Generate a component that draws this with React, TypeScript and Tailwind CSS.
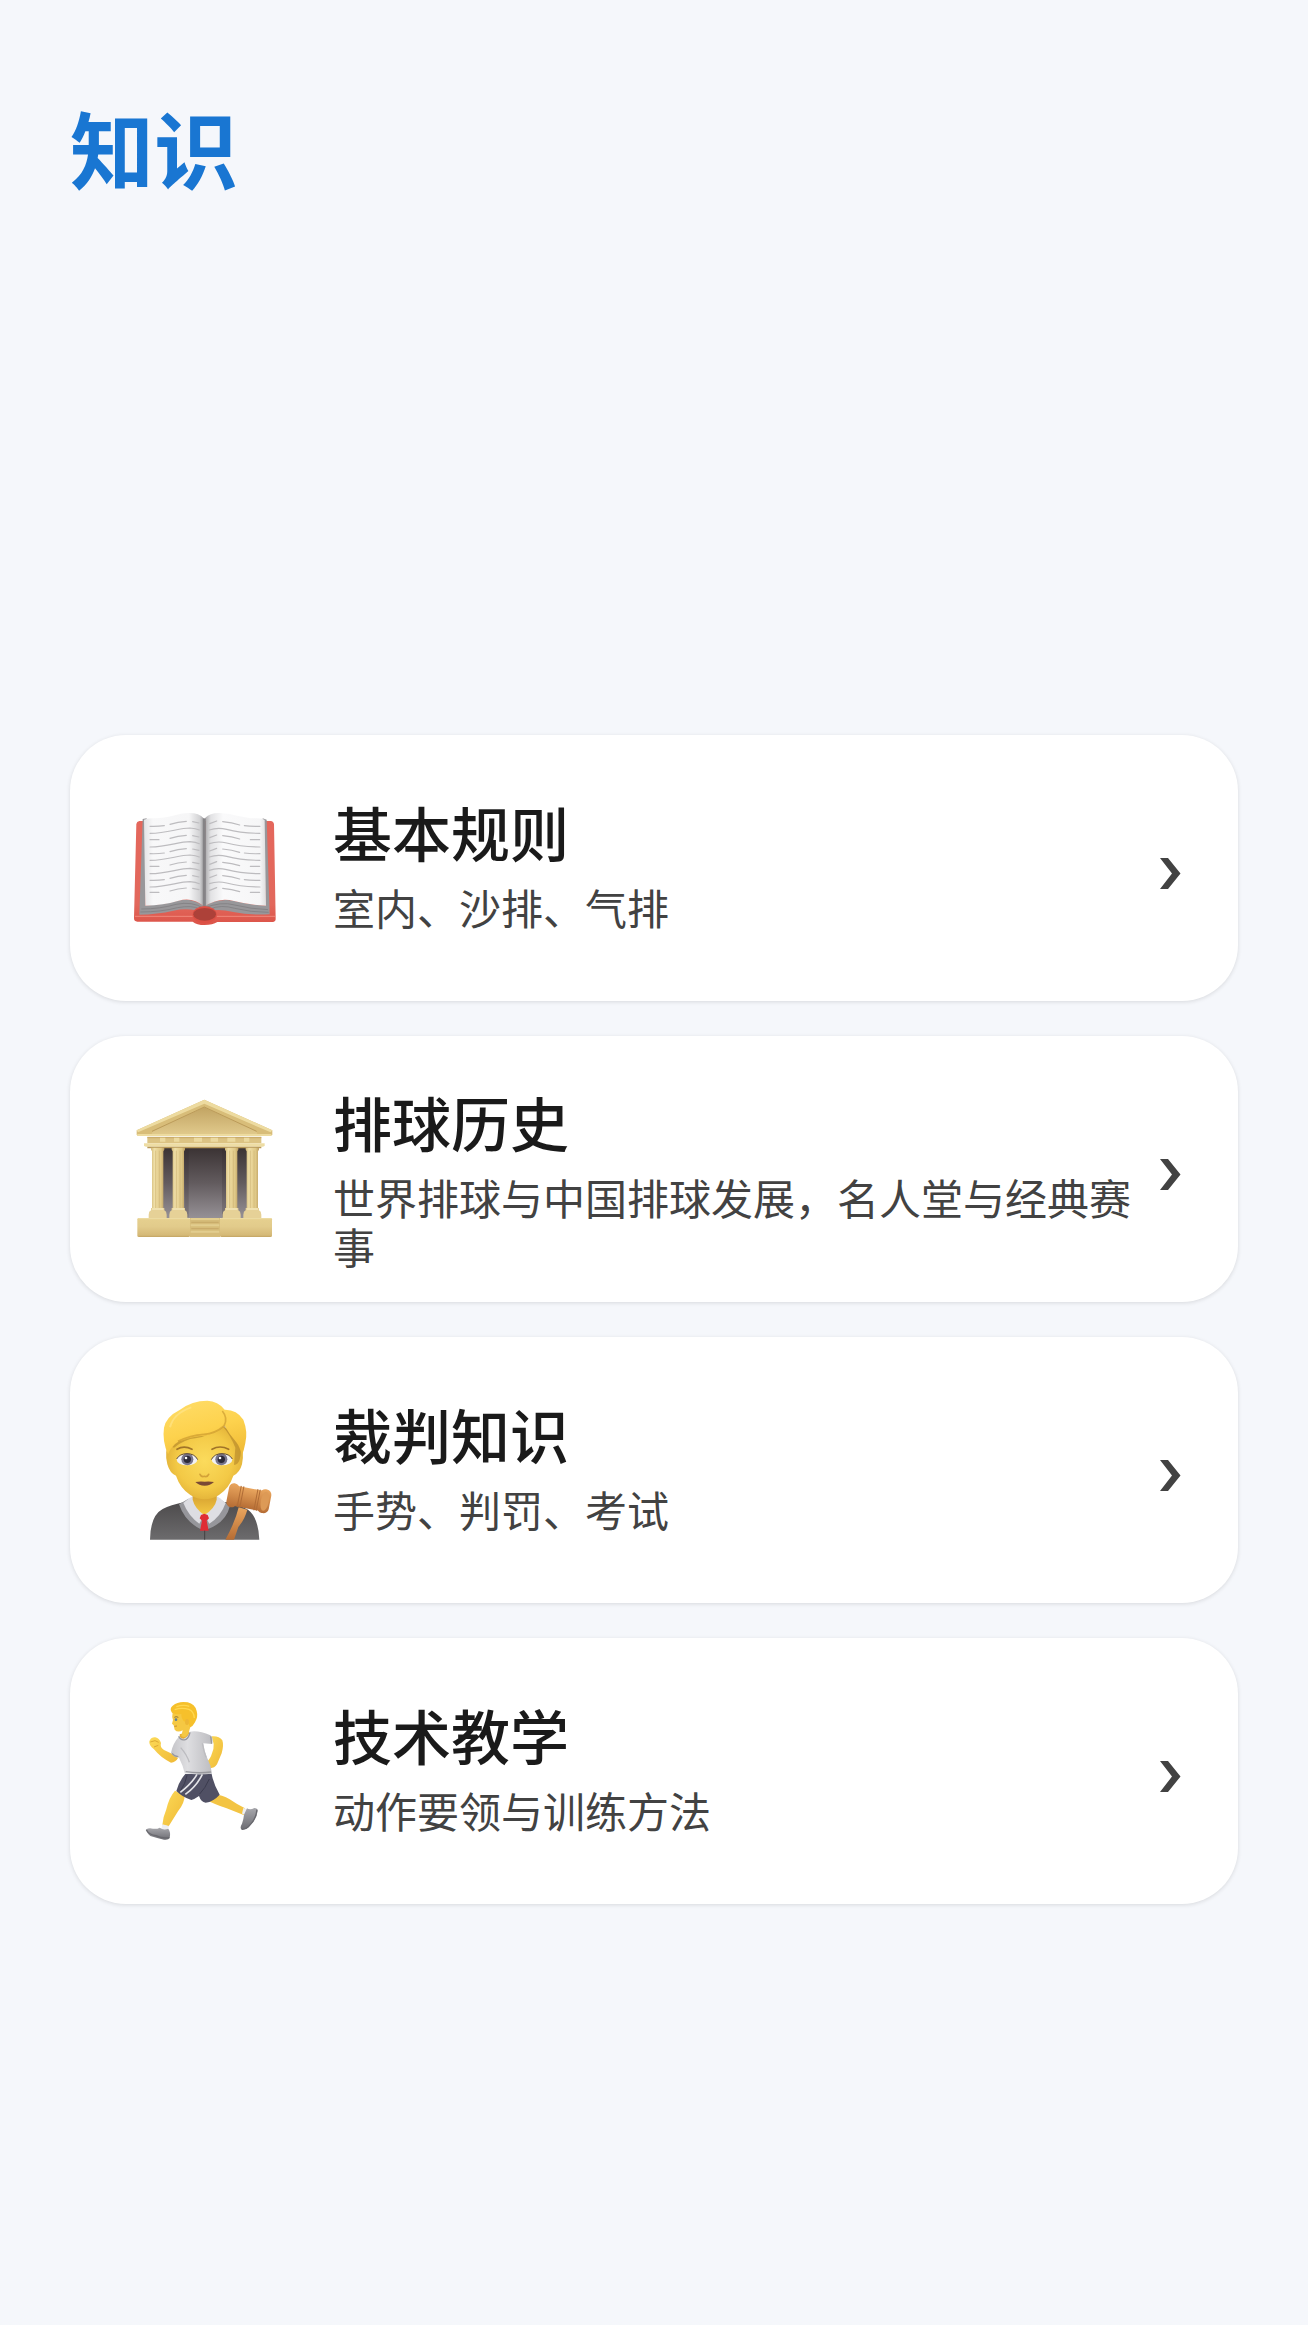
import React from 'react';

interface Topic {
  title: string;
  description: string;
  href: string;
  icon: React.ReactNode;
}

const textLines = [108, 129, 150, 170, 190, 210, 230, 250, 270, 290, 308];

const BookIcon = () => (
  <svg viewBox="0 -20 510 510" className="w-full" aria-hidden="true">
    <defs>
      <linearGradient id="bookLeft" x1="0" x2="1">
        <stop offset="0" stopColor="#e4e4e6" />
        <stop offset="0.15" stopColor="#f8f8f9" />
        <stop offset="0.75" stopColor="#f6f6f7" />
        <stop offset="0.93" stopColor="#d2d2d4" />
        <stop offset="1" stopColor="#9b9a9c" />
      </linearGradient>
      <linearGradient id="bookRight" x1="0" x2="1">
        <stop offset="0" stopColor="#a6a5a7" />
        <stop offset="0.1" stopColor="#e2e2e4" />
        <stop offset="0.3" stopColor="#fafafb" />
        <stop offset="0.9" stopColor="#f6f6f7" />
        <stop offset="1" stopColor="#dededf" />
      </linearGradient>
      <linearGradient id="bookCover" x1="0" y1="0" x2="0" y2="1">
        <stop offset="0" stopColor="#e4675c" />
        <stop offset="0.8" stopColor="#e2685c" />
        <stop offset="1" stopColor="#dc5348" />
      </linearGradient>
    </defs>
    <path
      d="M58 94H452Q461 95 462 104L467 388Q467 396 458 397H292Q278 406 254 406Q230 406 218 396H52Q42 396 42 386L49 103Q50 95 58 94Z"
      fill="url(#bookCover)"
    />
    <path d="M45 380H218M290 380H465" stroke="#f0887b" strokeWidth="3" />
    <path d="M68 88L80 86L76 348Q130 345 180 332Q218 324 252 350Q298 324 342 334Q390 346 438 348L428 86L440 90L449 374Q390 377 340 367Q302 358 280 362H228Q196 355 160 363Q112 374 58 375Z" fill="#98979a" />
    <path d="M64 358Q120 358 168 344Q218 334 250 356Q304 334 344 346Q392 358 444 360M61 367Q124 367 172 354Q216 346 240 358M270 358Q304 344 344 356Q392 368 446 368" stroke="#858386" strokeWidth="3" fill="none" />
    <path d="M72 90Q84 84 104 86C145 86 174 70 208 70Q238 70 251 86L252 350Q218 321 176 333Q130 347 76 348Z" fill="url(#bookLeft)" />
    <path d="M256 84Q270 69 300 70C340 72 370 86 404 86Q424 84 434 90L438 348Q390 346 342 334Q298 321 254 350Z" fill="url(#bookRight)" />
    <path d="M253 86V350" stroke="#858386" strokeWidth="9" />
    <ellipse cx="254" cy="375" rx="36" ry="26" fill="#dc5045" />
    <ellipse cx="254" cy="374" rx="34" ry="19" fill="#ad4139" />
    <g stroke="#bdbcbf" strokeWidth="3.5" fill="none" strokeLinecap="round">
      {textLines.map((y, i) =>
        i % 2 === 1 ? (
          <g key={y}>
            <path d={`M90 ${y + 2}C145 ${y + 2} 174 ${y - 14} 210 ${y - 14}Q228 ${y - 13} 238 ${y - 8}`} />
            <path d={`M268 ${y - 8}Q292 ${y - 17} 320 ${y - 10}C360 ${y + 1} 382 ${y + 2} 420 ${y + 2}`} />
          </g>
        ) : (
          <g key={y}>
            <path d={i % 4 === 2 ? `M90 ${y}H117` : `M90 ${y + 2}Q112 ${y + 3} 133 ${y}`} />
            <path d={`M150 ${y - 4}Q174 ${y - 12} 199 ${y - 13}M218 ${y - 12}L237 ${y - 8}`} />
            <path d={`M269 ${y - 6}L290 ${y - 14}M308 ${y - 12}Q336 ${y - 9} 359 ${y - 2}`} />
            <path d={i % 4 === 2 ? `M391 ${y}H419` : `M373 ${y}Q392 ${y + 3} 420 ${y + 2}`} />
          </g>
        )
      )}
    </g>
  </svg>
);

const columns = [
  { x: 96, w: 34 },
  { x: 158, w: 34 },
  { x: 318, w: 34 },
  { x: 380, w: 34 },
];

const TempleIcon = () => (
  <svg viewBox="0 0 510 510" className="w-full" aria-hidden="true">
    <defs>
      <linearGradient id="templeDoor" x1="0" y1="0" x2="0" y2="1">
        <stop offset="0" stopColor="#3a3233" />
        <stop offset="0.5" stopColor="#625b5e" />
        <stop offset="1" stopColor="#969196" />
      </linearGradient>
      <linearGradient id="templeColumn" x1="0" x2="1">
        <stop offset="0" stopColor="#d3b978" />
        <stop offset="0.25" stopColor="#efdfa8" />
        <stop offset="0.5" stopColor="#e8d395" />
        <stop offset="0.75" stopColor="#dfc887" />
        <stop offset="1" stopColor="#bea062" />
      </linearGradient>
      <linearGradient id="templeBase" x1="0" y1="0" x2="0" y2="1">
        <stop offset="0" stopColor="#e6d08f" />
        <stop offset="0.45" stopColor="#e2cb8b" />
        <stop offset="1" stopColor="#d2b573" />
      </linearGradient>
      <linearGradient id="templeGable" x1="0" y1="0" x2="0" y2="1">
        <stop offset="0" stopColor="#c2a463" />
        <stop offset="1" stopColor="#e0c98b" />
      </linearGradient>
    </defs>
    <path d="M112 190H402V402H112Z" fill="url(#templeDoor)" />
    <path d="M194 194H206V400H194ZM306 194H318V400H306Z" fill="#2c2526" opacity="0.2" />
    <path d="M253 47L457 139V151Q456 156 449 156H57Q50 156 50 151V139Z" fill="#d8bd79" />
    <path d="M253 47L457 139L452 145L253 59L54 145L50 139Z" fill="#eddba0" />
    <path d="M253 70L404 140Q420 150 404 151H102Q88 150 102 140Z" fill="url(#templeGable)" />
    <path d="M253 69L410 142M253 69L96 142" stroke="#bb9b5a" strokeWidth="3" />
    <path d="M52 153H454" stroke="#eddb9f" strokeWidth="6" />
    <path d="M82 158H424V178H82Z" fill="#dcc383" />
    <path d="M82 161H424" stroke="#c6a868" strokeWidth="3" />
    <path d="M120 161H136V173H120ZM162 161H178V173H162ZM222 161H246V173H222ZM272 161H294V173H272ZM322 161H346V173H322ZM372 161H388V173H372Z" fill="#ecdaa0" />
    <path d="M72 178H434V184Q434 188 428 188H78Q72 188 72 184Z" fill="#eedda4" />
    <path d="M82 188H424V193H82Z" fill="#b79859" />
    {columns.map(({ x, w }) => (
      <g key={x}>
        <path d={`M${x - 3} 191H${x + w + 3}V197L${x + w} 202V374H${x}V202L${x - 3} 197Z`} fill="url(#templeColumn)" />
        <path d={`M${x + 11} 200V374M${x + 22} 200V374`} stroke="#d0b575" strokeWidth="2" />
        <path
          d={`M${x - 3} 372H${x + w + 3}V379Q${x + w + 10} 382 ${x + w + 10} 392V403H${x - 10}V392Q${x - 10} 382 ${x - 3} 379Z`}
          fill="#e6d197"
        />
        <path d={`M${x} 375H${x + w}`} stroke="#f2e5b6" strokeWidth="5" />
      </g>
    ))}
    <path d="M210 402H300V459H210Z" fill="#d6bc79" />
    <path d="M212 405H298M212 424H298M212 443H298" stroke="#e2cd8e" strokeWidth="6" />
    <path d="M214 415H296M214 434H296" stroke="#bf9f5f" strokeWidth="2" />
    <rect x="52" y="402" width="158" height="57" rx="4" fill="url(#templeBase)" />
    <rect x="300" y="402" width="156" height="57" rx="4" fill="url(#templeBase)" />
    <path d="M55 404H207M303 404H453" stroke="#eedda6" strokeWidth="3" />
    <path d="M56 457H206M304 457H452" stroke="#c5a665" strokeWidth="3" />
  </svg>
);

const JudgeIcon = () => (
  <svg viewBox="0 0 510 510" className="w-full" aria-hidden="true">
    <defs>
      <radialGradient id="judgeFace" cx="0.5" cy="0.5" r="0.6">
        <stop offset="0" stopColor="#fbdb5c" />
        <stop offset="0.6" stopColor="#f3c946" />
        <stop offset="1" stopColor="#dba833" />
      </radialGradient>
      <linearGradient id="judgeHair" x1="0.2" y1="0" x2="0.6" y2="1">
        <stop offset="0" stopColor="#ffdc66" />
        <stop offset="0.55" stopColor="#fdd24d" />
        <stop offset="1" stopColor="#f2be39" />
      </linearGradient>
      <linearGradient id="judgeRobe" x1="0" y1="0" x2="0" y2="1">
        <stop offset="0" stopColor="#4d4b4c" />
        <stop offset="1" stopColor="#6c6b6d" />
      </linearGradient>
      <linearGradient id="judgeNeck" x1="0" y1="0" x2="0" y2="1">
        <stop offset="0" stopColor="#cd952a" />
        <stop offset="1" stopColor="#f4c944" />
      </linearGradient>
      <linearGradient id="gavelWood" x1="0" y1="0" x2="0" y2="1">
        <stop offset="0" stopColor="#e9a65f" />
        <stop offset="0.5" stopColor="#d18a49" />
        <stop offset="1" stopColor="#b56c34" />
      </linearGradient>
    </defs>
    <path d="M90 464Q91 392 128 372Q152 360 190 352L253 378L318 351Q362 360 384 374Q415 397 418 464Z" fill="url(#judgeRobe)" />
    <path d="M177 358L205 341L254 388L298 341L330 362Q318 414 259 434H245Q195 411 177 358Z" fill="#96969b" />
    <path d="M207 340L222 332L253 389L238 416Q206 394 190 354Z" fill="#dddde2" />
    <path d="M300 340L288 332L253 389L268 416Q303 394 317 354Z" fill="#dedee3" />
    <path d="M218 312H290V344Q285 370 253 390Q224 370 218 344Z" fill="url(#judgeNeck)" />
    <path d="M243 390L253 386L263 390L267 400L260 407L266 437H240L246 407L239 400Z" fill="#df2d35" />
    <path d="M254 437V464" stroke="#444243" strokeWidth="3" />
    <path
      d="M148 166Q132 202 142 238Q150 266 168 272Q180 309 211 330Q232 343 254 343Q276 343 297 330Q328 309 340 272Q359 264 366 238Q374 202 360 166Q315 112 254 112Q190 112 148 166Z"
      fill="url(#judgeFace)"
    />
    <path d="M145 205Q152 180 162 188Q196 162 226 160Q270 154 308 124Q332 152 346 188L342 240Q366 240 362 175L316 108L160 165Z" fill="#a87a24" opacity="0.5" />
    <path
      d="M144 208Q126 166 132 128Q138 95 180 74Q216 47 262 47Q294 48 314 74Q350 73 370 104Q384 140 376 174Q372 196 366 210Q358 183 350 173Q328 148 314 122Q286 147 254 152Q216 154 190 165Q161 169 144 208Z"
      fill="url(#judgeHair)"
    />
    <path d="M307 78Q325 100 312 123Q285 146 252 148Q210 151 174 169" stroke="#ba8524" strokeWidth="5" fill="none" opacity="0.5" />
    <path d="M150 127Q160 85 214 67" stroke="#ffe99a" strokeWidth="6" fill="none" opacity="0.5" />
    <path d="M171 193Q192 180 216 193M276 193Q300 179 326 193" stroke="#a17428" strokeWidth="5" fill="none" strokeLinecap="round" />
    <ellipse cx="201" cy="224" rx="31" ry="17" fill="#f1f1f4" />
    <ellipse cx="306" cy="224" rx="31" ry="17" fill="#f1f1f4" />
    <circle cx="202" cy="223" r="18" fill="#77748b" />
    <circle cx="304" cy="223" r="18" fill="#77748b" />
    <circle cx="202" cy="223" r="11" fill="#2d2a38" />
    <circle cx="304" cy="223" r="11" fill="#2d2a38" />
    <circle cx="198" cy="219" r="4" fill="#fff" />
    <circle cx="300" cy="219" r="4" fill="#fff" />
    <path d="M170 222Q179 206 201 206Q224 206 233 224M274 224Q283 206 306 206Q328 206 337 222" stroke="#5f4a38" strokeWidth="3" fill="none" />
    <path d="M240 268Q244 277 253 274Q262 277 266 268" stroke="#d3a238" strokeWidth="5" fill="none" strokeLinecap="round" />
    <path d="M226 291Q240 288 254 290Q268 288 282 291Q271 302 254 302Q237 302 226 291Z" fill="#7a4a35" />
    <path d="M356 367L382 374Q374 404 355 426L342 464H316Q346 410 356 367Z" fill="url(#gavelWood)" />
    <g transform="rotate(11 388 341)">
      <rect x="344" y="310" width="88" height="61" fill="url(#gavelWood)" />
      <rect x="322" y="304" width="31" height="73" rx="15" fill="url(#gavelWood)" />
      <rect x="416" y="304" width="35" height="72" rx="16" fill="url(#gavelWood)" />
      <path d="M357 308V373M365 308V373M408 308V373M415 308V373" stroke="#b06c36" strokeWidth="3" />
      <ellipse cx="435" cy="340" rx="12" ry="29" fill="#dd9a56" />
    </g>
  </svg>
);

const RunnerIcon = () => (
  <svg viewBox="0 0 510 510" className="w-full" aria-hidden="true">
    <defs>
      <linearGradient id="runnerShirt" x1="0" x2="1">
        <stop offset="0" stopColor="#c5c5c9" />
        <stop offset="0.4" stopColor="#dedee1" />
        <stop offset="1" stopColor="#bcbcc0" />
      </linearGradient>
      <linearGradient id="runnerSkin" x1="0" y1="0" x2="1" y2="1">
        <stop offset="0" stopColor="#fcda58" />
        <stop offset="1" stopColor="#efb936" />
      </linearGradient>
      <linearGradient id="runnerShoe" x1="0" y1="0" x2="0" y2="1">
        <stop offset="0" stopColor="#a7a7ac" />
        <stop offset="1" stopColor="#6c6c72" />
      </linearGradient>
    </defs>
    <path d="M275 151Q297 149 307 163Q312 178 305 202L291 235Q281 249 267 246Q253 238 260 227Q271 220 276 202Q282 189 281 174Z" fill="url(#runnerSkin)" />
    <path d="M262 342Q278 353 320 367L371 387L375 367Q349 354 329 340Q307 327 281 325Z" fill="#f3c443" />
    <path d="M370 366L383 370L380 386L366 383Z" fill="#eeeef1" />
    <path d="M381 367Q390 373 403 366Q413 366 413 376Q410 401 389 420Q378 433 364 430Q359 424 366 413Q371 398 372 386Z" fill="url(#runnerShoe)" />
    <path d="M411 371Q408 401 385 422Q375 431 365 430" stroke="#68686e" strokeWidth="4" fill="none" />
    <path d="M165 314L194 329Q194 350 174 376L146 421L127 417Q129 393 139 370Q147 334 165 314Z" fill="url(#runnerSkin)" />
    <path d="M127 415L147 420L143 432L124 428Z" fill="#eeeef1" />
    <path d="M119 425Q131 434 145 428Q153 439 149 456Q145 463 132 461Q112 456 91 450Q78 440 79 430Q87 424 99 428Q110 430 119 425Z" fill="url(#runnerShoe)" />
    <path d="M79 431Q86 446 108 449Q126 458 148 455" stroke="#68686e" strokeWidth="4" fill="none" />
    <path d="M196 264H275Q281 296 299 326Q280 347 257 350Q243 348 237 330Q223 340 214 342Q188 334 169 315Q176 287 196 264Z" fill="#505064" />
    <path d="M239 324Q255 308 268 279M201 268Q196 294 182 313" stroke="#3b3b4e" strokeWidth="3" fill="none" />
    <path d="M231 265Q216 292 181 319M247 265Q229 302 196 325" stroke="#e4e4e8" strokeWidth="5" fill="none" />
    <path d="M90 162Q94 153 106 154Q119 158 123 171Q119 184 132 192L164 207L174 216Q167 229 153 230Q123 216 102 190Q86 179 88 166Z" fill="url(#runnerSkin)" />
    <path d="M91 168L105 164L116 169M102 183L115 178" stroke="#dca833" strokeWidth="3" fill="none" />
    <path d="M179 145L207 137Q215 154 198 163Q183 164 179 153Z" fill="#e5ae33" />
    <path d="M178 151Q159 171 153 200Q159 213 177 215Q189 238 194 262Q232 268 276 263Q274 240 262 217Q252 197 250 172L276 174Q281 155 271 148Q236 132 209 137Q204 154 190 158Q182 158 178 151Z" fill="url(#runnerShirt)" />
    <path d="M176 151Q183 166 198 160Q207 154 210 139M156 202Q164 212 175 212M272 151L275 173M197 257Q235 263 273 258" stroke="#98989d" strokeWidth="4" fill="none" />
    <path d="M182 185Q200 205 208 229M247 172Q252 198 258 214" stroke="#bcbcc0" strokeWidth="4" fill="none" />
    <path d="M158 78Q155 93 159 102L156 113L161 118L164 131Q173 141 188 133L184 150Q196 160 206 140Q210 124 215 113L222 88L190 68Z" fill="#f5c843" />
    <path d="M156 80Q147 68 158 59Q176 44 203 49Q225 54 230 75Q235 92 225 109Q218 122 211 124Q206 121 207 106Q200 98 193 107Q183 98 184 84Q171 86 156 80Z" fill="#f6c02b" />
    <path d="M164 71Q184 64 207 70Q222 77 223 96M169 62Q190 55 208 61" stroke="#ffd850" strokeWidth="4" fill="none" />
    <path d="M163 94Q168 90 175 94" stroke="#8f7232" strokeWidth="3" fill="none" />
    <ellipse cx="168" cy="101" rx="4" ry="4" fill="#628092" />
    <path d="M163 121L171 120" stroke="#c98f30" strokeWidth="3" />
    <ellipse cx="201" cy="108" rx="6" ry="9" fill="#edb735" />
  </svg>
);

const ChevronIcon = () => (
  <svg viewBox="0 0 22 48" className="h-12 w-[22px] shrink-0" aria-hidden="true">
    <path d="M0 14H8L20.5 29.5L8 45H0L12 29.5Z" fill="#424242" />
  </svg>
);

const topics: Topic[] = [
  { title: '基本规则', description: '室内、沙排、气排', href: '#rules', icon: <BookIcon /> },
  { title: '排球历史', description: '世界排球与中国排球发展，名人堂与经典赛事', href: '#history', icon: <TempleIcon /> },
  { title: '裁判知识', description: '手势、判罚、考试', href: '#referee', icon: <JudgeIcon /> },
  { title: '技术教学', description: '动作要领与训练方法', href: '#skills', icon: <RunnerIcon /> },
];

const TopicCard: React.FC<{ topic: Topic }> = ({ topic }) => (
  <a
    href={topic.href}
    className="flex min-h-[266px] items-center rounded-[56px] bg-white pr-14 pl-[50px] shadow-[0_1px_4px_rgba(0,0,0,0.12)]"
  >
    <div className="w-[170px] shrink-0">{topic.icon}</div>
    <div className="ml-[43px] min-w-0 flex-1 self-start pt-[50px] pb-6">
      <div className="flex min-h-[157px] flex-col justify-center">
        <h2 className="text-[59px] leading-[72px] font-medium text-[#1a1a1a]">{topic.title}</h2>
        <p className="mt-3.5 text-[42px] leading-[49px] text-[#424242]">{topic.description}</p>
      </div>
    </div>
    <ChevronIcon />
  </a>
);

const App: React.FC = () => {
  return (
    <div
      lang="zh-CN"
      className="flex min-h-screen flex-col bg-[#f5f7fb] px-[70px] font-['Noto_Sans_CJK_SC',sans-serif]"
    >
      <header className="min-h-[314px] pt-[97px]">
        <h1 className="text-[84px] leading-[100px] font-bold text-[#1976d2]">知识</h1>
      </header>
      <main className="flex flex-1 flex-col justify-center gap-[35px]">
        {topics.map((topic) => (
          <TopicCard key={topic.title} topic={topic} />
        ))}
      </main>
    </div>
  );
};

export default App;
